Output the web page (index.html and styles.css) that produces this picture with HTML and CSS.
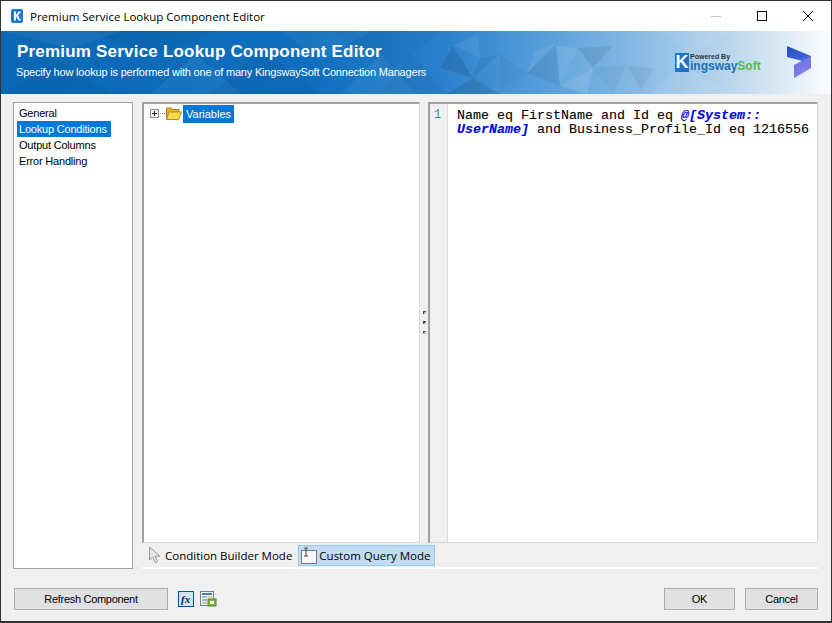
FILE: index.html
```html
<!DOCTYPE html>
<html lang="en">
<head>
<meta charset="utf-8">
<title>Premium Service Lookup Component Editor</title>
<link rel="stylesheet" href="styles.css">
</head>
<body>
<div class="window">
  <header class="titlebar">
    <svg class="app-icon" width="12" height="14" viewBox="0 0 12 14"><rect width="12" height="14" rx="2" fill="#1b78c8"/><path d="M3 2.5h2v3.6l2.6-3.6H10L7 6.7l3.1 4.8H7.7L5 7.3v4.2H3z" fill="#fff"/></svg>
    <span class="title-text">Premium Service Lookup Component Editor</span>
    <div class="caption">
      <span class="cap-btn"><svg width="12" height="12" viewBox="0 0 12 12"><path d="M1 6.5h10" stroke="#c4c4c4"/></svg></span>
      <span class="cap-btn"><svg width="12" height="12" viewBox="0 0 12 12"><rect x="1.5" y="1.5" width="9" height="9" fill="none" stroke="#111"/></svg></span>
      <span class="cap-btn"><svg width="12" height="12" viewBox="0 0 12 12"><path d="M1 1l10 10M11 1L1 11" stroke="#111" fill="none"/></svg></span>
    </div>
  </header>
  <section class="banner">
    <svg class="banner-art" width="830" height="63" viewBox="0 0 830 63" preserveAspectRatio="none">
      <defs>
        <linearGradient id="bg" x1="0" x2="1" y1="0" y2="0">
          <stop offset="0" stop-color="#0a68b4"/><stop offset="0.38" stop-color="#0f6fbe"/><stop offset="0.53" stop-color="#2a80cc"/><stop offset="0.67" stop-color="#5da2dc"/><stop offset="0.82" stop-color="#9fc7e9"/><stop offset="0.9" stop-color="#c5dcef"/><stop offset="0.96" stop-color="#e6f0f8"/><stop offset="1" stop-color="#fbfcfe"/>
        </linearGradient>
      </defs>
      <rect width="830" height="63" fill="url(#bg)"/>
      <g fill="#000" fill-opacity="0.04">
        <path d="M0 63L60 30l50 33z"/><path d="M90 0l60 26L215 0z"/><path d="M210 63l50-45 60 45z"/><path d="M330 0l60 40 50-40z"/><path d="M380 63l30-40 36 40z"/>
        <path d="M452 15l20 32-33-10z" fill-opacity="0.1"/>
        <path d="M479 27l20-4-27 24z" fill-opacity="0.06"/>
        <path d="M472 47l27 16h-53z" fill-opacity="0.1"/>
        <path d="M499 23l27 19-27 18z" fill-opacity="0.03"/>
        <path d="M555 15l4 40-33-13z" fill-opacity="0.06"/>
        <path d="M577 17l35-2-20 22z" fill-opacity="0.07"/>
        <path d="M592 37l34-4-14 30z" fill-opacity="0.04"/>
        <path d="M626 35l27 2-13 22z" fill-opacity="0.06"/>
      </g>
      <g fill="#fff" fill-opacity="0.05">
        <path d="M0 0l70 18L120 0z"/><path d="M150 63l45-40 45 40z"/><path d="M280 0l40 30 50-30z"/><path d="M340 63l40-40 35 40z"/>
        <path d="M452 15l25-12 2 24z" fill-opacity="0.07"/>
        <path d="M554 13l-28 29 8-22z" fill-opacity="0.08"/>
        <path d="M555 15l22 2-18 38z" fill-opacity="0.1"/>
        <path d="M577 17l15 20-33 18z" fill-opacity="0.05"/>
        <path d="M592 37l-33 18 27 8z" fill-opacity="0.12"/>
        <path d="M650 63l30-30 50 30z" fill-opacity="0.08"/><path d="M660 0l30 24 40-24z" fill-opacity="0.06"/>
      </g>
    </svg>
    <div class="banner-text">
      <h1 class="banner-title">Premium Service Lookup Component Editor</h1>
      <p class="banner-sub">Specify how lookup is performed with one of many KingswaySoft Connection Managers</p>
    </div>
    <div class="ks-logo">
      <span class="ks-k">K</span>
      <div class="ks-words">
        <span class="ks-powered">Powered By</span>
        <span class="ks-name">ingsway<b class="ks-soft">Soft</b></span>
      </div>
    </div>
    <svg class="dyn-logo" width="24" height="32" viewBox="0 0 24 32">
      <defs>
        <linearGradient id="dy" x1="0" x2="0.4" y1="0" y2="1"><stop offset="0" stop-color="#1e4fc4"/><stop offset="0.5" stop-color="#3c62d6"/><stop offset="1" stop-color="#7f6ee4"/></linearGradient>
      </defs>
      <path d="M0 0l24 10v12L7 32V19l8-4L0 11z" fill="url(#dy)"/>
      <path d="M15 15l9-5v12L7 32V19z" fill="#8f86ea" fill-opacity=".55"/>
    </svg>
  </section>
  <main class="body">
    <div class="workspace">
      <nav class="nav">
        <span class="nav-item">General</span>
        <span class="nav-item is-selected">Lookup Conditions</span>
        <span class="nav-item">Output Columns</span>
        <span class="nav-item">Error Handling</span>
      </nav>
      <div class="right">
        <div class="split">
          <div class="tree">
            <div class="tree-row">
              <svg class="tree-exp" width="22" height="9" viewBox="0 0 22 9"><rect x="0.5" y="0.5" width="8" height="8" fill="#f4f4f4" stroke="#8a8f98"/><path d="M2 4.5h5M4.5 2v5" stroke="#222"/><path d="M10 4.5h8" stroke="#999" stroke-dasharray="1 1"/></svg>
              <svg class="tree-folder" width="16" height="13" viewBox="0 0 16 13"><path d="M0.5 1h5l1 1.5h6.5v3H3.5l-3 6.5z" fill="#e3b21f" stroke="#a9842a"/><path d="M3 5h12.5l-3 7.5H0.5z" fill="#fbd84a" stroke="#b08a2a"/></svg>
              <span class="tree-label">Variables</span>
            </div>
          </div>
          <div class="splitter"><i class="grip"></i><i class="grip"></i><i class="grip"></i></div>
          <div class="editor">
            <div class="gutter">1</div>
            <div class="code">Name eq FirstName and Id eq <em class="var">@[System::<br>UserName]</em> and Business_Profile_Id eq 1216556</div>
          </div>
        </div>
        <div class="modes">
          <span class="mode">
            <svg width="14" height="18" viewBox="0 0 14 18"><path d="M1.5 1v13l3.2-3 2.4 5.5 2.4-1-2.4-5.3H12z" fill="#e6e6e6" stroke="#999"/></svg>
            Condition Builder Mode
          </span>
          <span class="mode is-active">
            <svg width="16" height="17" viewBox="0 0 16 17"><rect x="0.5" y="3.5" width="15" height="13" fill="#f6f6f6" stroke="#777"/><path d="M3 1h4M5 1v8M3 9h4" stroke="#444" fill="none"/></svg>
            Custom Query Mode
          </span>
        </div>
      </div>
    </div>
    <footer class="footer">
      <button class="btn btn-refresh">Refresh Component</button>
      <svg class="fx-icon" width="16" height="16" viewBox="0 0 16 16"><rect x="0.5" y="0.5" width="15" height="15" fill="#cfe6fa" stroke="#0b4aa8"/><text x="3" y="12" class="fx-text">fx</text></svg>
      <svg class="tbl-icon" width="17" height="16" viewBox="0 0 17 16"><rect x="0.5" y="0.5" width="13" height="14" fill="#f5f7fa" stroke="#6f7f90"/><path d="M2 3h10" stroke="#4a78b5" stroke-width="2"/><path d="M2 6h5" stroke="#4a78b5"/><path d="M8 6h4" stroke="#e8a83a"/><path d="M2 9h5" stroke="#4a78b5"/><path d="M2 12h5" stroke="#76a83a"/><rect x="8" y="8" width="8" height="7" fill="#7cb342" stroke="#5a8a2a"/><rect x="10" y="10" width="4" height="3" fill="#fff"/></svg>
      <span class="footer-gap"></span>
      <button class="btn btn-ok">OK</button>
      <button class="btn btn-cancel">Cancel</button>
    </footer>
  </main>
</div>
</body>
</html>
```

FILE: styles.css
```css
* { box-sizing: border-box; }
html, body { margin: 0; padding: 0; height: 100%; }
body { background: #f0f0f0; font-family: "Liberation Sans", Arial, sans-serif; font-size: 11px; color: #000; }
.window { width: 832px; height: 623px; border: 1px solid #333; border-bottom: 2px solid #333; display: flex; flex-direction: column; background: #f0f0f0; overflow: hidden; }
.titlebar { height: 30px; background: #fff; display: flex; align-items: center; padding-left: 10px; flex: none; }
.app-icon { flex: none; }
.title-text { margin-left: 7px; font-family: "Open Sans", sans-serif; font-size: 11.5px; white-space: nowrap; }
.caption { margin-left: auto; display: flex; }
.cap-btn { width: 46px; height: 30px; display: flex; align-items: center; justify-content: center; }
.banner { position: relative; height: 63px; flex: none; padding: 11px 0 0 15px; overflow: hidden; }
.banner-art { position: absolute; left: 0; top: 0; }
.banner-text { position: relative; color: #fff; }
.banner-title { margin: 0 0 0 1px; font-size: 17px; line-height: 20px; font-weight: 700; letter-spacing: 0.2px; white-space: nowrap; }
.banner-sub { margin: 3px 0 0; font-size: 11px; letter-spacing: -0.19px; line-height: 14px; white-space: nowrap; }
.ks-logo { position: absolute; left: 674px; top: 22px; display: flex; align-items: flex-end; }
.ks-k { width: 14px; height: 19px; background: #1b74c4; color: #fff; font-weight: 700; font-size: 18px; line-height: 19px; text-align: center; }
.ks-words { display: flex; flex-direction: column; margin-left: 1px; }
.ks-powered { font-size: 7px; line-height: 8px; font-weight: 700; color: #333; }
.ks-name { font-size: 12px; line-height: 11px; font-weight: 700; color: #1c6fb8; white-space: nowrap; }
.ks-soft { color: #58b947; }
.dyn-logo { position: absolute; left: 786px; top: 15px; }
.body { flex: 1; display: flex; flex-direction: column; padding: 8px 13px 0 12px; min-height: 0; }
.workspace { display: flex; gap: 9px; height: 467px; flex: none; }
.nav { width: 120px; background: #fff; border: 1px solid #a0a0a0; padding: 2px 3px; display: flex; flex-direction: column; align-items: flex-start; flex: none; letter-spacing: -0.2px; }
.nav-item { height: 16px; line-height: 16px; padding: 0 3px 0 2px; white-space: nowrap; }
.is-selected { background: #0078d7; color: #fff; padding-right: 4px; }
.right { flex: 1; display: flex; flex-direction: column; min-width: 0; }
.split { display: flex; height: 441px; flex: none; }
.tree { width: 278px; background: #fff; border: 2px solid #a0a0a0; border-right: 1px solid #d8d8d8; border-bottom: 1px solid #d8d8d8; padding: 1px 0 0 6px; }
.tree-row { display: flex; align-items: center; height: 17px; }
.tree-exp { flex: none; }
.tree-folder { margin-left: -6px; flex: none; }
.tree-label { margin-left: 1px; background: #0078d7; color: #fff; padding: 0 3px; height: 18px; line-height: 18px; }
.splitter { width: 8px; display: flex; flex-direction: column; justify-content: center; align-items: center; gap: 7px; }
.grip { display: block; width: 3px; height: 3px; background: linear-gradient(135deg, #444 50%, #bbb 50%); }
.editor { flex: 1; background: #fff; border: 2px solid #a0a0a0; border-right: 1px solid #d8d8d8; border-bottom: 1px solid #d8d8d8; display: flex; min-width: 0; }
.gutter { width: 18px; flex: none; background: #f0f0f0; border-right: 1px solid #dcdcdc; color: #2b91af; font-family: "Liberation Mono", monospace; font-size: 12px; line-height: 14px; padding-top: 4px; padding-left: 4px; }
.code { padding: 5px 0 0 9px; font-family: "Liberation Mono", "Courier New", monospace; font-size: 13.33px; line-height: 14px; white-space: nowrap; -webkit-text-stroke: 0.1px currentColor; }
.var { color: #0000f0; font-weight: 700; font-style: italic; }
.modes { height: 26px; display: flex; align-items: center; padding-left: 4px; border-bottom: 2px solid #fff; gap: 3px; flex: none; font-family: "Open Sans", sans-serif; font-size: 11.5px; }
.mode { display: flex; align-items: center; gap: 3px; height: 21px; padding: 0 3px 0 2px; white-space: nowrap; }
.is-active { background: #c1dcf3; border: 1px solid #90c8f6; gap: 2px; padding-right: 4px; }
.footer { display: flex; align-items: center; padding: 19px 0 0 1px; }
.btn { height: 22px; font-family: "Liberation Sans", Arial, sans-serif; font-size: 11px; letter-spacing: -0.3px; background: #e1e1e1; border: 1px solid #adadad; color: #000; padding: 0; }
.btn-refresh { width: 154px; }
.fx-icon { margin-left: 10px; }
.fx-text { font-family: "Liberation Serif", serif; font-style: italic; font-weight: 700; font-size: 11px; fill: #123; }
.tbl-icon { margin-left: 6px; }
.footer-gap { flex: 1; }
.btn-ok { width: 71px; }
.btn-cancel { width: 73px; margin-left: 10px; }
```
